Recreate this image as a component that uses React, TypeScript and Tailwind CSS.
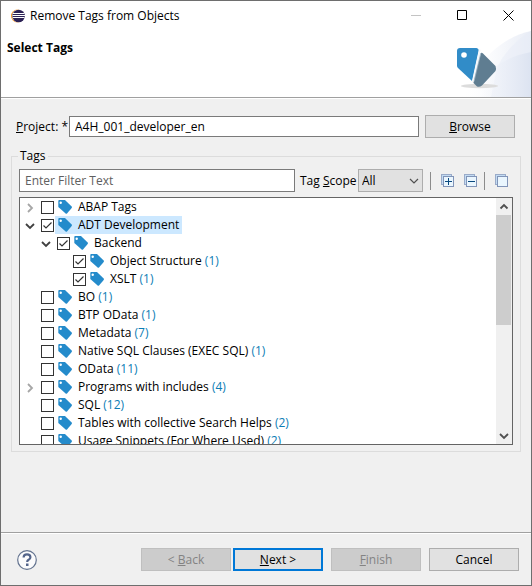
import React, { useState } from "react";

type Tag = {
  name: string;
  count?: number;
  level: number;
  node?: "open" | "closed";
  checked?: boolean;
  selected?: boolean;
};

const TAGS: Tag[] = [
  { name: "ABAP Tags", level: 0, node: "closed" },
  { name: "ADT Development", level: 0, node: "open", checked: true, selected: true },
  { name: "Backend", level: 1, node: "open", checked: true },
  { name: "Object Structure", count: 1, level: 2, checked: true },
  { name: "XSLT", count: 1, level: 2, checked: true },
  { name: "BO", count: 1, level: 0 },
  { name: "BTP OData", count: 1, level: 0 },
  { name: "Metadata", count: 7, level: 0 },
  { name: "Native SQL Clauses (EXEC SQL)", count: 1, level: 0 },
  { name: "OData", count: 11, level: 0 },
  { name: "Programs with includes", count: 4, level: 0, node: "closed" },
  { name: "SQL", count: 12, level: 0 },
  { name: "Tables with collective Search Helps", count: 2, level: 0 },
  { name: "Usage Snippets (For Where Used)", count: 2, level: 0 },
];

const INDENT = ["pl-1", "pl-5", "pl-9"];

function EclipseIcon() {
  return (
    <svg width="14" height="14" viewBox="0 0 14 14" aria-hidden="true">
      <circle cx="6.4" cy="7" r="6.4" fill="#f7941e" />
      <circle cx="7.4" cy="7" r="6.5" fill="#fff" />
      <circle cx="7.6" cy="7" r="6.3" fill="#2c2255" />
      <path d="M2 4.500h11.500M1.500 6.500h12.500M2 8.500h11.500" stroke="#fff" strokeWidth="1" />
    </svg>
  );
}

function WizardBanner() {
  return (
    <svg width="120" height="67" viewBox="0 0 120 67" className="block" aria-hidden="true">
      <defs>
        <linearGradient id="arcOuter" x1="0" x2="1">
          <stop offset="0.3" stopColor="#fff" />
          <stop offset="1" stopColor="#e9edf6" />
        </linearGradient>
        <linearGradient id="arcInner" x1="0" x2="1">
          <stop offset="0" stopColor="#fff" stopOpacity="0" />
          <stop offset="1" stopColor="#dce3f1" />
        </linearGradient>
      </defs>
      <path d="M120 1C98 5 78 22 66 38S50 60 48 67H120Z" fill="url(#arcOuter)" />
      <path d="M120 1C104 10 92 25 86 38L80 67H120Z" fill="#e6ebf6" opacity="0.45" />
      <path d="M120 22C104 25 92 31 82 38L50 67H120Z" fill="url(#arcInner)" />
      <ellipse cx="68.500" cy="56" rx="18.500" ry="2.200" fill="#dcdcdc" />
      <path d="M70 23Q71 22.500 72 23.500L84.500 36Q85.500 38.500 84.500 41L71 55.500Q68.500 57.500 66 56.500L62 52.500L63.500 47Z" fill="#5f7d91" />
      <path d="M49 18H65.500Q68 18.500 67.500 21L61 51L47 38Q46 37 46 35.500V21Q46 18 49 18Z" fill="#318cc8" />
      <path d="M69 19.500L61.800 52.500" stroke="#f6f8fb" strokeWidth="1.600" />
      <path d="M69.800 23L63 51.500" stroke="#9fb5c4" strokeWidth="0.800" />
      <circle cx="53" cy="25" r="2.800" fill="#fff" />
    </svg>
  );
}

function TagIcon() {
  return (
    <svg width="14" height="14" viewBox="0 0 14 14" className="shrink-0" aria-hidden="true">
      <path d="M1.200 0H7L13.700 6.600Q14.200 7.300 13.700 8L9 13.500Q8.300 14 7.600 13.400L0.300 7V1Q0.300 0 1.200 0Z" fill="#248bcb" />
      <circle cx="2.700" cy="2.700" r="1.200" fill="#fff" />
    </svg>
  );
}

function Chevron({ dir, color = "#404040" }: { dir: "up" | "down" | "right"; color?: string }) {
  const d = { up: "M1.500 6.500L5 3L8.500 6.500", down: "M1 3L5 7L9 3", right: "M3 1L7 5L3 9" }[dir];
  return (
    <svg width="10" height="10" viewBox="0 0 10 10" aria-hidden="true">
      <path d={d} fill="none" stroke={color} strokeWidth="1.800" />
    </svg>
  );
}

function SheetsIcon({ sign }: { sign?: "plus" | "minus" }) {
  return (
    <svg width="14" height="14" viewBox="0 0 14 14" aria-hidden="true">
      <rect x="0.500" y="0.500" width="10" height="10" fill="#c3dcf3" stroke="#9aabc9" />
      <rect x="2.500" y="2.500" width="10" height="10" fill="#eaf6fe" stroke="#8194b8" />
      {sign && <path d="M4 7.500H11" stroke="#0a4a80" />}
      {sign === "plus" && <path d="M7.500 4V11" stroke="#0a4a80" />}
    </svg>
  );
}

function TreeRow({ tag, id }: { tag: Tag; id: string }) {
  const [checked, setChecked] = useState(!!tag.checked);
  return (
    <li className={`flex h-[18px] items-center ${INDENT[tag.level]}`}>
      <span className="flex w-[17px] shrink-0 items-center pl-px pt-[2px]">
        {tag.node && (
          <button type="button" aria-label={`Toggle ${tag.name}`}>
            <span className="block">
              <Chevron dir={tag.node === "open" ? "down" : "right"} color={tag.node === "open" ? "#404040" : "#a6a6a6"} />
            </span>
          </button>
        )}
      </span>
      <span className="grid shrink-0 pt-px">
        <input
          id={id}
          type="checkbox"
          checked={checked}
          onChange={(e) => setChecked(e.target.checked)}
          className="peer col-start-1 row-start-1 size-[13px] appearance-none border border-[#333] bg-white"
        />
        <svg viewBox="0 0 13 13" className="pointer-events-none invisible col-start-1 row-start-1 size-[13px] peer-checked:visible" aria-hidden="true">
          <path d="M2.500 6.500L5 9L10.500 3.500" fill="none" stroke="#333" strokeWidth="1.200" />
        </svg>
      </span>
      <label
        htmlFor={id}
        className={`ml-px flex h-[18px] items-center gap-[6px] whitespace-nowrap pl-[3px] pr-[3px] ${tag.selected ? "bg-[#cce8ff]" : ""}`}
      >
        <TagIcon />
        <span>
          {tag.name}
          {tag.count !== undefined && <span className="text-[#0c7db5]"> ({tag.count})</span>}
        </span>
      </label>
    </li>
  );
}

const BUTTON = "h-[23px] w-[90px] shrink-0 border border-[#adadad] bg-[#e1e1e1] leading-4";
const BUTTON_OFF = "h-[23px] w-[90px] shrink-0 border border-[#bfbfbf] bg-[#ccc] leading-4 text-[#838383]";

export default function App() {
  return (
    <div className="flex min-h-screen flex-col border border-[#6e6e6e] bg-[#f0f0f0] font-['Open_Sans','Noto_Sans',sans-serif] text-[12px] leading-4 text-black">
      <header className="flex h-[96px] bg-white">
        <div className="min-w-0 flex-1">
          <div className="flex h-[29px] items-center gap-[5px] pl-[10px]">
            <EclipseIcon />
            <span>Remove Tags from Objects</span>
          </div>
          <h1 className="pl-[6px] pt-[10px] font-bold">Select Tags</h1>
        </div>
        <div className="flex flex-col items-end">
          <div className="flex h-[29px]">
            <button type="button" aria-label="Minimize" disabled className="grid w-[46px] place-items-center">
              <svg width="11" height="11" viewBox="0 0 11 11"><path d="M0 5.500H10" stroke="#c4c4c4" /></svg>
            </button>
            <button type="button" aria-label="Maximize" className="grid w-[46px] place-items-center">
              <svg width="11" height="11" viewBox="0 0 11 11"><path d="M.5 .5H9.500V9.500H.5Z" fill="none" stroke="#000" /></svg>
            </button>
            <button type="button" aria-label="Close" className="grid w-[46px] place-items-center">
              <svg width="11" height="11" viewBox="0 0 11 11"><path d="M.5 .5L10.500 10.500M10.500 .5L.5 10.500" stroke="#000" /></svg>
            </button>
          </div>
          <WizardBanner />
        </div>
      </header>
      <main className="flex-1 border-t border-[#a0a0a0] pb-4">
        <div className="flex items-center border-t border-white pl-[15px] pr-[16px] pt-4">
          <label htmlFor="project" className="w-[53px] shrink-0 whitespace-nowrap">
            <u>P</u>roject: *
          </label>
          <input id="project" type="text" defaultValue="A4H_001_developer_en" className="h-[21px] min-w-0 flex-1 border border-[#7a7a7a] bg-white px-[5px]" />
          <button type="button" className={`ml-[6px] ${BUTTON}`}>
            <u>B</u>rowse
          </button>
        </div>
        <fieldset className="mx-[10px] mt-[10px] border border-[#dcdcdc] px-[7px] pb-[6px]">
          <legend className="ml-[-1px] px-[2px]">Tags</legend>
          <div className="mt-[5px] flex items-center">
            <input type="text" aria-label="Filter" placeholder="Enter Filter Text" className="h-[23px] min-w-0 flex-1 border border-[#7a7a7a] bg-white px-[5px] placeholder:text-[#606060]" />
            <label htmlFor="scope" className="w-[63px] shrink-0 whitespace-nowrap pl-[5px]">
              Tag <u>S</u>cope
            </label>
            <div className="grid shrink-0">
              <select id="scope" defaultValue="All" className="col-start-1 row-start-1 h-[23px] w-[65px] appearance-none border border-[#adadad] bg-[#e1e1e1] pl-[3px]">
                <option>All</option>
              </select>
              <svg width="10" height="10" viewBox="0 0 10 10" className="pointer-events-none col-start-1 row-start-1 mr-1 self-center justify-self-end" aria-hidden="true">
                <path d="M1 3L5 7L9 3" fill="none" stroke="#505050" strokeWidth="1.200" />
              </svg>
            </div>
            <span className="ml-[7px] h-[18px] w-px bg-[#8c8c8c]" />
            <button type="button" aria-label="Expand All" className="ml-[10px]"><SheetsIcon sign="plus" /></button>
            <button type="button" aria-label="Collapse All" className="ml-[9px]"><SheetsIcon sign="minus" /></button>
            <span className="ml-[6px] h-[18px] w-px bg-[#8c8c8c]" />
            <button type="button" aria-label="Deselect All" className="ml-[10px] mr-[4px]"><SheetsIcon /></button>
          </div>
          <div className="mt-[5px] flex h-[248px] border border-[#646464] bg-white">
            <ul className="min-w-0 flex-1 overflow-x-hidden overflow-y-auto [scrollbar-width:none]">
              {TAGS.map((t, i) => (
                <TreeRow key={t.name} tag={t} id={`tag-${i}`} />
              ))}
            </ul>
            <div className="flex w-[16px] flex-col bg-[#f0f0f0]" aria-hidden="true">
              <span className="grid h-[17px] place-items-center"><Chevron dir="up" color="#505050" /></span>
              <span className="mr-px h-[110px] bg-[#cdcdcd]" />
              <span className="flex-1" />
              <span className="grid h-[17px] place-items-center"><Chevron dir="down" color="#505050" /></span>
            </div>
          </div>
        </fieldset>
      </main>
      <footer className="border-t border-[#a0a0a0]">
        <div className="flex items-center border-t border-white pb-[14px] pl-4 pr-[12px] pt-[14px]">
          <button type="button" aria-label="Help">
            <svg width="20" height="20" viewBox="0 0 20 20" aria-hidden="true">
              <circle cx="10" cy="10" r="9.300" fill="#fbfbfc" stroke="#63738f" strokeWidth="1.200" />
              <path d="M6.600 7.600Q6.600 4.400 10 4.400Q13.400 4.400 13.400 7.200Q13.400 8.800 11.600 9.800Q10.200 10.600 10.200 12" fill="none" stroke="#53648a" strokeWidth="2.200" />
              <rect x="9" y="13.500" width="2.500" height="2.500" fill="#53648a" />
            </svg>
          </button>
          <span className="flex-1" />
          <button type="button" disabled className={BUTTON_OFF}>&lt; <u>B</u>ack</button>
          <button type="button" className="ml-[2px] h-[23px] w-[90px] shrink-0 border-2 border-[#0078d7] bg-[#e1e1e1] leading-4"><u>N</u>ext &gt;</button>
          <button type="button" disabled className={`ml-2 ${BUTTON_OFF}`}><u>F</u>inish</button>
          <button type="button" className={`ml-2 ${BUTTON}`}>Cancel</button>
        </div>
      </footer>
    </div>
  );
}
